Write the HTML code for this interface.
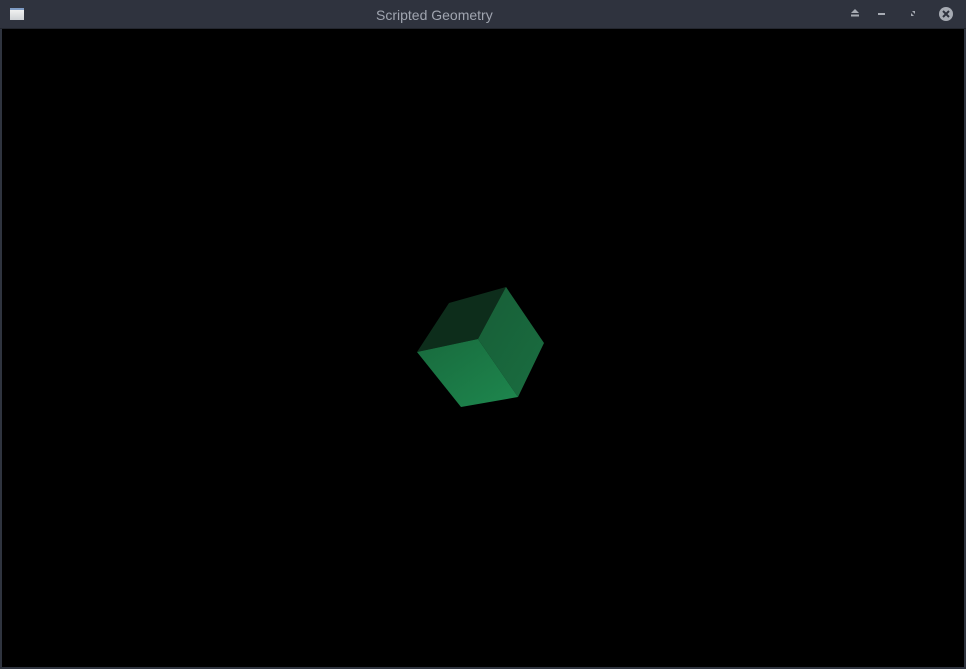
<!DOCTYPE html>
<html><head><style>
body{margin:0;width:966px;height:669px;background:#2f343f;overflow:hidden;font-family:"Liberation Sans",sans-serif}
.tb{position:absolute;left:0;top:0;width:966px;height:28px;background:#2f333e;border-bottom:1px solid #23262e}
.t{position:absolute;left:376px;top:7px;color:#a0a5b0;font-size:14px;white-space:nowrap}
.c{position:absolute;left:2px;top:29px;width:962px;height:638px;background:#000}
</style></head><body>
<div class="tb">
<div style="position:absolute;left:10px;top:8px;width:14px;height:12px;background:linear-gradient(#f0f0f0,#cfd2d6);border-top:2px solid #7f9cc4;box-sizing:border-box"></div>
<div class="t">Scripted Geometry</div>
<svg style="position:absolute;left:840px;top:0" width="126" height="28">
<polygon points="11,13 15,9 19,13" fill="#a7abb3"/><rect x="11" y="14.5" width="8" height="2" fill="#a7abb3"/>
<rect x="38" y="13" width="7" height="2" fill="#a7abb3"/>
<polygon points="72,11 75,11 75,14" fill="#a7abb3"/><polygon points="71,13 71,16 74,16" fill="#a7abb3"/>
<circle cx="106" cy="14" r="7" fill="#a7abb3"/><path d="M103,11 L109,17 M109,11 L103,17" stroke="#2f333e" stroke-width="2"/>
</svg>
</div>
<div class="c"></div>
<svg style="position:absolute;left:0;top:0" width="966" height="669">
<defs>
<linearGradient id="f" x1="0" y1="0" x2="1" y2="1"><stop offset="0" stop-color="#186a3d"/><stop offset="1" stop-color="#1e874e"/></linearGradient>
<linearGradient id="r" x1="0" y1="0" x2="1" y2="1"><stop offset="0" stop-color="#175e37"/><stop offset="1" stop-color="#1a6d40"/></linearGradient>
</defs>
<polygon points="506,287 449,303 417,352 478,339" fill="#0d2d1b"/>
<polygon points="506,287 544,343 518,397 478,339" fill="url(#r)"/>
<polygon points="417,352 478,339 518,397 461,407" fill="url(#f)"/>
</svg>
</body></html>
